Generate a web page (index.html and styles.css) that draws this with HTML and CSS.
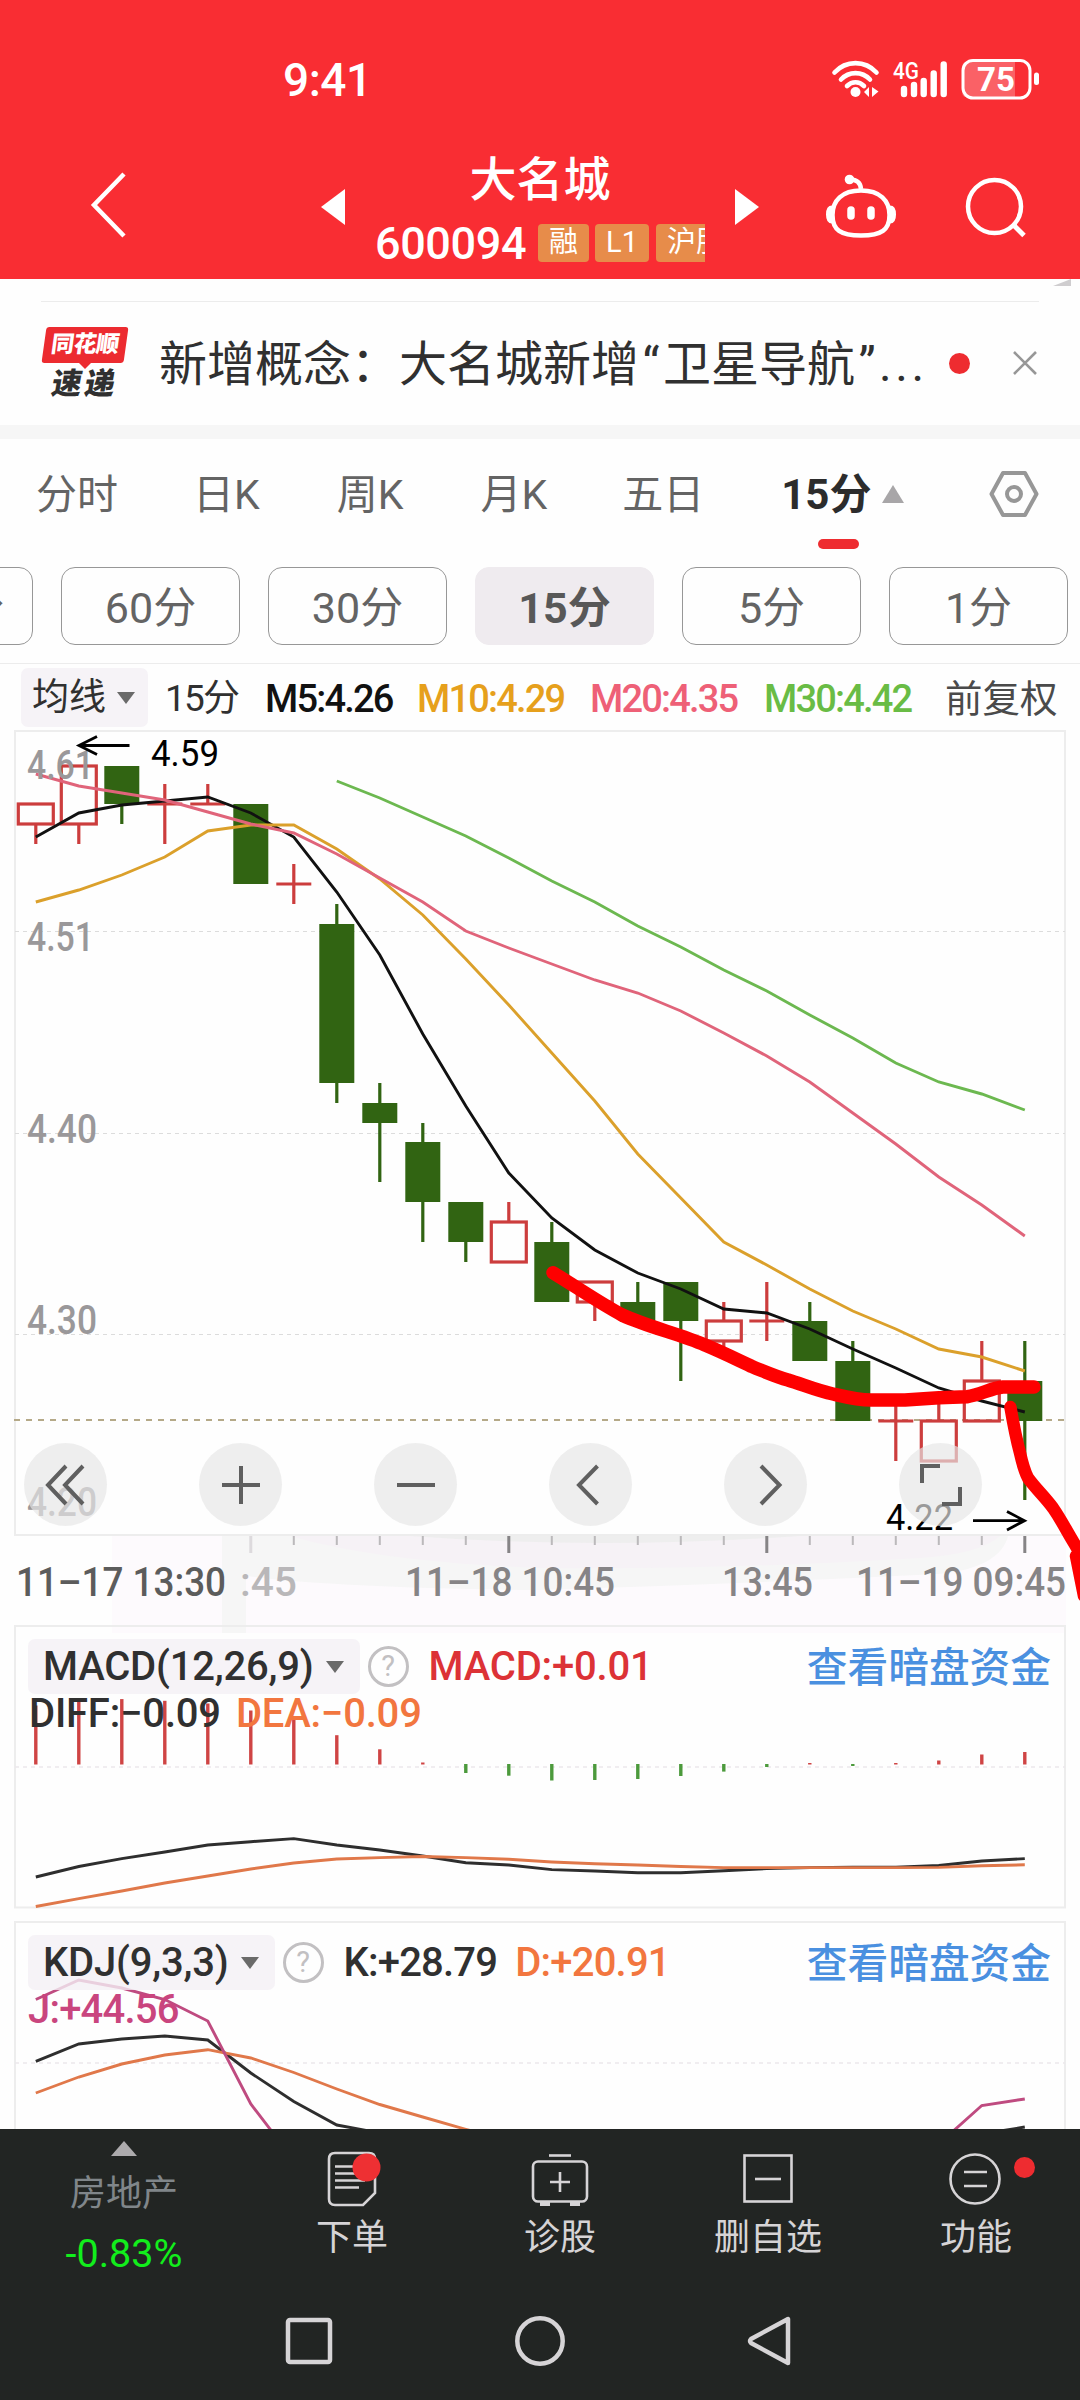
FILE: index.html
```html
<!DOCTYPE html>
<html lang="zh-CN">
<head>
<meta charset="UTF-8">
<meta name="viewport" content="width=device-width, initial-scale=1.0">
<title>大名城 600094</title>
<link rel="stylesheet" href="styles.css">
</head>
<body>

<header class="header">
  <div class="status-bar">
    <span class="clock">9:41</span>
    <svg class="status-icons" width="212" height="44" viewBox="828 58 212 44">
      <g fill="none" stroke="#fff" stroke-width="4.6" stroke-linecap="round">
        <path d="M834.5 72.5C846 60 865 60 876.500 72.500"/>
        <path d="M841 79.500C849 71 862 71 870 79.500"/>
        <path d="M847 86C852 81 859 81 864 86"/>
      </g>
      <circle cx="855.500" cy="92" r="5" fill="#fff"/>
      <path d="M864 92l5-5v10zM872 87l6.500 4.500-6.500 5.500z" fill="#fff"/>
      <text class="net" x="893" y="79" textLength="26" lengthAdjust="spacingAndGlyphs">4G</text>
      <g stroke="#fff" stroke-width="6.400" stroke-linecap="round">
        <path d="M904 89v5M914 85v9M923.700 81v13M933.700 73.500v20.500M943.700 64.500v29.500"/>
      </g>
      <path d="M966 62h49v35h-49q-4 0-4-6v-23q0-6 4-6z" fill="#fff" fill-opacity=".25"/>
      <rect x="963" y="60.500" width="67" height="37.500" rx="10" fill="none" stroke="#fff" stroke-width="3"/>
      <rect x="1034" y="72.500" width="5" height="12.500" rx="2.500" fill="#fff"/>
      <text class="charge" x="977" y="91" textLength="38" lengthAdjust="spacingAndGlyphs">75</text>
    </svg>
  </div>
  <div class="title-bar">
    <svg class="back" width="40" height="70" viewBox="0 0 40 70"><path d="M36 2L6 33l30 31" fill="none" stroke="#fff" stroke-width="4.500"/></svg>
    <svg class="prev" width="24" height="36" viewBox="0 0 24 36"><path d="M24 0v36L0 18z" fill="#fff"/></svg>
    <div class="stock">
      <div class="stock-name">大名城</div>
      <div class="stock-meta">
        <span class="stock-code">600094</span>
        <span class="tag">融</span>
        <span class="tag">L1</span>
        <span class="tag">沪股通</span>
      </div>
    </div>
    <svg class="next" width="24" height="36" viewBox="0 0 24 36"><path d="M0 0v36l24-18z" fill="#fff"/></svg>
    <svg class="robot" width="70" height="66" viewBox="826 173 70 66">
      <path d="M861 189.500c19 0 28.500 10 28.500 24.500 0 15-8 20.500-28.500 20.500s-28.500-5.500-28.500-20.500c0-14.500 9.500-24.500 28.500-24.500z" fill="none" stroke="#fff" stroke-width="4.500"/>
      <path d="M861 188c-.5-6-4-9.500-11-9.500" fill="none" stroke="#fff" stroke-width="4.500"/>
      <circle cx="849.500" cy="178.500" r="4.800" fill="#fff"/>
      <path d="M832 204.500q-6 0-6 9t6 9zM890 204.500q6 0 6 9t-6 9z" fill="#fff"/>
      <path d="M851 209v6M871 209v6" stroke="#fff" stroke-width="7.500" stroke-linecap="round"/>
    </svg>
    <svg class="search" width="62" height="66" viewBox="965 173 62 66">
      <circle cx="994.500" cy="205.500" r="26.500" fill="none" stroke="#fff" stroke-width="4.500"/>
      <path d="M1013 223.500l11 11" stroke="#fff" stroke-width="5"/>
    </svg>
  </div>
</header>

<section class="news">
  <i class="news-corner"></i>
  <div class="news-row">
    <div class="news-logo">
      <span class="logo-top">同花顺</span>
      <i class="logo-tip"></i>
      <span class="logo-bottom">速递</span>
    </div>
    <div class="news-text">新增概念：大名城新增<span class="quote">“</span>卫星导航<span class="quote">”</span><span class="dots">...</span></div>
    <i class="dot"></i>
    <svg class="news-close" width="26" height="26" viewBox="0 0 26 26"><path d="M2 2l22 22M24 2L2 24" stroke="#979797" stroke-width="2.600"/></svg>
  </div>
</section>

<nav class="tabs">
  <span class="tab">分时</span>
  <span class="tab">日K</span>
  <span class="tab">周K</span>
  <span class="tab">月K</span>
  <span class="tab">五日</span>
  <span class="tab active">15分</span>
  <svg class="tab-arrow" width="22" height="18" viewBox="0 0 22 18"><path d="M11 0l11 18H0z" fill="#a8a6a8"/></svg>
  <svg class="settings" width="50" height="48" viewBox="0 0 50 48">
    <path d="M14 3h22l11.500 21L36 45H14L2.500 24z" fill="none" stroke="#979797" stroke-width="4" stroke-linejoin="round"/>
    <circle cx="25" cy="24" r="7" fill="none" stroke="#979797" stroke-width="4"/>
  </svg>
</nav>

<div class="periods">
  <button class="period">120分</button>
  <button class="period">60分</button>
  <button class="period">30分</button>
  <button class="period selected">15分</button>
  <button class="period">5分</button>
  <button class="period">1分</button>
</div>

<div class="legend">
  <span class="select ma-select">均线<i class="caret"></i></span>
  <span class="legend-period">15分</span>
  <span class="m5">M5:4.26</span>
  <span class="m10">M10:4.29</span>
  <span class="m20">M20:4.35</span>
  <span class="m30">M30:4.42</span>
  <span class="adjust">前复权</span>
</div>

<section class="main-chart">
  <svg class="plot" id="klinePlot" width="1080" height="895" viewBox="0 730 1080 895">
    <!-- time axis background -->
    <rect x="112" y="1536" width="954" height="89" fill="#fdfafd"/>
    <path d="M222 1536H1008q-8 32-70 38-200 10-400 16-200-2-292-14v49h-24z" fill="#f6f6f6"/>
    <path d="M290 1536H1000q-20 18-80 22-200 12-380 10-160-6-250-32z" fill="#f6f2f6"/>
    <path d="M410 1536H800q-200 14-390 0z" fill="#eeeeee"/>
    <rect x="15" y="731" width="1050" height="804" fill="none" stroke="#ededed" stroke-width="2"/>
    <g stroke="#dcdcdc" stroke-dasharray="4 4">
      <path d="M15 931.500H1065M15 1133.500H1065M15 1334.500H1065"/>
    </g>
    <path d="M14 1420H1065" stroke="#b5a988" stroke-width="2" stroke-dasharray="6 6"/>
    <g id="ticks"></g>
    <g id="candles"></g>
    <g id="averages"></g>
    <g class="price-label">
      <text x="27" y="779" textLength="67" lengthAdjust="spacingAndGlyphs">4.61</text>
      <text x="27" y="951" textLength="67" lengthAdjust="spacingAndGlyphs">4.51</text>
      <text x="27" y="1143" textLength="70" lengthAdjust="spacingAndGlyphs">4.40</text>
      <text x="27" y="1334" textLength="70" lengthAdjust="spacingAndGlyphs">4.30</text>
      <text x="27" y="1515.500" textLength="70" lengthAdjust="spacingAndGlyphs">4.20</text>
    </g>
    <g class="extreme">
      <text x="151" y="766" textLength="68" lengthAdjust="spacingAndGlyphs">4.59</text>
      <text x="886" y="1530" textLength="67" lengthAdjust="spacingAndGlyphs">4.22</text>
    </g>
    <path d="M129.500 745.500H79M97 736.500l-18 9 18 9M973 1520.700h51M1007 1511.500l17.500 9.200-17.500 9.200" fill="none" stroke="#000" stroke-width="2.800"/>
    <g class="time-label">
      <text class="dark" x="16" y="1595.500" textLength="210" lengthAdjust="spacingAndGlyphs">11–17 13:30</text>
      <text class="faded" x="240" y="1595.500" textLength="57" lengthAdjust="spacingAndGlyphs">:45</text>
      <text x="405" y="1595.500" textLength="210" lengthAdjust="spacingAndGlyphs">11–18 10:45</text>
      <text x="722" y="1595.500" textLength="91" lengthAdjust="spacingAndGlyphs">13:45</text>
      <text x="856" y="1595.500" textLength="210" lengthAdjust="spacingAndGlyphs">11–19 09:45</text>
    </g>
    <!-- hand-drawn trend -->
    <g fill="none" stroke="#fe0000" stroke-linecap="round" stroke-linejoin="round">
      <path stroke-width="13.500" d="M553 1272.700C575 1286 598 1302 622 1315C648 1327 680 1334 705 1345C722 1352 738 1360 753 1367C768 1373 777 1377 788 1380C804 1385 818 1391 833 1394C846 1397 858 1400 871 1400L905 1400L939 1397.700L967 1396.700C980 1395 991 1388 1003 1387L1034 1387"/>
      <path stroke-width="12.500" d="M1010.400 1407C1013 1422 1016 1438 1020 1453C1022 1462 1024 1470 1028 1478C1036 1489 1045 1497 1053 1508C1062 1521 1066 1530 1074 1543L1090 1570"/>
      <path stroke-width="12.500" d="M1076 1556L1084 1596"/>
    </g>
  </svg>
  <div class="controls">
    <button class="control"><svg width="42" height="42" viewBox="-21 -21 42 42"><path d="M0-19l-18 19L0 19M17-19L-1 0l18 19"/></svg></button>
    <button class="control"><svg width="42" height="42" viewBox="-21 -21 42 42"><path d="M-19 0h38M0-19v38"/></svg></button>
    <button class="control"><svg width="42" height="42" viewBox="-21 -21 42 42"><path d="M-19 0h38"/></svg></button>
    <button class="control"><svg width="42" height="42" viewBox="-21 -21 42 42"><path d="M6.500-19L-12 0 6.500 19"/></svg></button>
    <button class="control"><svg width="42" height="42" viewBox="-21 -21 42 42"><path d="M-5-19L13.500 0-5 19"/></svg></button>
    <button class="control"><svg width="42" height="42" viewBox="-21 -21 42 42"><path d="M-19-2v-17h18M19 2v17H1"/></svg></button>
  </div>
</section>

<section class="panel macd">
  <svg class="plot" id="macdPlot" width="1080" height="296" viewBox="0 1625 1080 296">
    <rect x="112" y="1625" width="954" height="8" fill="#fdfafd"/>
    <rect x="222" y="1625" width="24" height="8" fill="#f6f6f6"/>
    <rect x="15" y="1626" width="1050" height="281.500" fill="none" stroke="#ededed" stroke-width="2"/>
    <path d="M15 1767H1065" stroke="#ebe8eb" stroke-width="1.600" stroke-dasharray="4 4"/>
  </svg>
  <div class="panel-head">
    <div class="panel-row">
      <span class="select">MACD(12,26,9)<i class="caret"></i></span>
      <span class="help">?</span>
      <span class="red">MACD:+0.01</span>
      <span class="link">查看暗盘资金</span>
    </div>
    <div class="panel-values">
      <span class="dark">DIFF:−0.09</span>
      <span class="orange">DEA:−0.09</span>
    </div>
  </div>
</section>

<section class="panel kdj">
  <svg class="plot" id="kdjPlot" width="1080" height="208" viewBox="0 1921 1080 208">
    <rect x="15" y="1922" width="1050" height="282" fill="none" stroke="#ededed" stroke-width="2"/>
    <path d="M15 2063H1065" stroke="#ebe8eb" stroke-width="1.600" stroke-dasharray="4 4"/>
  </svg>
  <div class="panel-head">
    <div class="panel-row">
      <span class="select">KDJ(9,3,3)<i class="caret"></i></span>
      <span class="help">?</span>
      <span class="dark">K:+28.79</span>
      <span class="orange">D:+20.91</span>
      <span class="link">查看暗盘资金</span>
    </div>
    <div class="panel-values">
      <span class="pink">J:+44.56</span>
    </div>
  </div>
</section>

<footer class="footer">
  <div class="actions">
    <div class="sector">
      <svg width="26" height="15" viewBox="0 0 26 15"><path d="M13 0l13 15H0z" fill="#adabad"/></svg>
      <span class="sector-name">房地产</span>
      <span class="sector-change">-0.83%</span>
    </div>
    <div class="action">
      <svg width="60" height="60" viewBox="-30 -30 60 60">
        <path d="M-17-26h34q6 0 6 6v34L11 26h-28q-6 0-6-6v-40q0-6 6-6z"/>
        <path d="M-17-12.500H10M-17-5.500H10M-17 1.500H13M-17 8.500H7"/>
        <circle class="badge" cx="14.500" cy="-11.500" r="14"/>
      </svg>
      <span>下单</span>
    </div>
    <div class="action">
      <svg width="60" height="60" viewBox="-30 -30 60 60">
        <path d="M-11-23.500h22"/>
        <rect x="-27" y="-17.500" width="54" height="40" rx="5"/>
        <path d="M-10 3h20M0-7v20"/>
        <path class="feet" d="M-20 25h10M10 25h10"/>
      </svg>
      <span>诊股</span>
    </div>
    <div class="action">
      <svg width="60" height="60" viewBox="-30 -30 60 60">
        <rect x="-23.500" y="-23.500" width="47" height="46"/>
        <path d="M-13 0h26"/>
      </svg>
      <span>删自选</span>
    </div>
    <div class="action">
      <svg width="60" height="60" viewBox="-30 -30 60 60">
        <circle cx="-1" cy="0" r="24.500"/>
        <path d="M-12-7h23M-12 7h23"/>
      </svg>
      <span>功能</span>
      <i class="dot action-dot"></i>
    </div>
  </div>
  <div class="system-nav">
    <svg width="48" height="52" viewBox="0 0 48 52"><rect x="3" y="5" width="42" height="42" rx="2" fill="none" stroke="#d6d4d6" stroke-width="4.500"/></svg>
    <svg width="52" height="52" viewBox="0 0 52 52"><circle cx="26" cy="26" r="22.700" fill="none" stroke="#d6d4d6" stroke-width="4.500"/></svg>
    <svg width="46" height="52" viewBox="0 0 46 52"><path d="M42 4v44L5 28q-2-2 0-4z" fill="none" stroke="#d6d4d6" stroke-width="4.500" stroke-linejoin="round"/></svg>
  </div>
</footer>

<script src="script.js"></script>
</body>
</html>
```
FILE: styles.css
```css
body {
  margin: 0;
  width: 1080px;
  height: 2400px;
  overflow: hidden;
  background-color: #fefefe;
  font-family: Roboto, "Noto Sans CJK SC", sans-serif;
  color: #303030;
}
svg {
  display: block;
  flex: none;
}
button {
  font-family: inherit;
  padding: 0;
}

/* header */
.header {
  height: 279px;
  background-color: #f92d33;
  color: #fff;
}
.status-bar {
  display: flex;
  justify-content: space-between;
  align-items: center;
  height: 120px;
  padding: 20px 40px 0 283px;
}
.clock {
  font-size: 46px;
  font-weight: 500;
  letter-spacing: -0.5px;
}
.net {
  font-size: 24px;
  font-weight: 500;
  fill: #fff;
}
.charge {
  font-size: 34px;
  font-weight: 700;
  fill: #fff;
}
.title-bar {
  display: flex;
  align-items: center;
  height: 133px;
  padding-left: 88px;
}
.prev {
  margin-left: 193px;
}
.stock {
  width: 330px;
  margin-left: 30px;
  overflow: hidden;
}
.stock-name {
  height: 56px;
  line-height: 58px;
  font-size: 47px;
  font-weight: 500;
  text-align: center;
}
.stock-meta {
  display: flex;
  align-items: center;
  gap: 6px;
  height: 38px;
  margin-top: 17px;
}
.stock-code {
  flex: none;
  width: 157px;
  font-size: 45px;
  font-weight: 500;
  line-height: 40px;
  padding-top: 2px;
  letter-spacing: -0.4px;
}
.tag {
  flex: none;
  box-sizing: border-box;
  height: 38px;
  padding: 0 11px;
  border-radius: 4px;
  background-color: #e78c4a;
  font-size: 29px;
  line-height: 37px;
}
.tag:last-child {
  margin-left: 1px;
}
.next {
  margin-left: 30px;
}
.robot {
  margin-left: 67px;
}
.search {
  margin-left: 69px;
}

/* news */
.news {
  position: relative;
  height: 146px;
  border-bottom: 14px solid #f6f6f6;
}
.news-corner {
  position: absolute;
  top: 0;
  right: 9px;
  border-left: 18px solid transparent;
  border-bottom: 7px solid #cfcdcf;
}
.news-row {
  display: flex;
  align-items: center;
  height: 122px;
  margin: 0 41px;
  border-top: 1px solid #ececec;
  position: relative;
  top: 22px;
}
.news-logo {
  display: flex;
  flex-direction: column;
  align-items: center;
  width: 88px;
  height: 72px;
}
.logo-top {
  width: 82px;
  height: 37px;
  border-radius: 3px;
  background-color: #ec2b30;
  color: #fff;
  font-size: 23px;
  font-weight: 900;
  line-height: 36px;
  letter-spacing: -0.5px;
  text-align: center;
  transform: skewX(-8deg);
}
.logo-tip {
  border: 6px solid transparent;
  border-top-color: #ec2b30;
  border-bottom: 0;
}
.logo-bottom {
  font-size: 30px;
  font-weight: 900;
  line-height: 30px;
  letter-spacing: 3px;
  transform: skewX(-10deg);
}
.news-text {
  width: 778px;
  margin-left: 30px;
  padding-bottom: 6px;
  font-size: 48px;
  white-space: nowrap;
}
.quote {
  display: inline-block;
  width: 24px;
  text-align: center;
}
.dots {
  letter-spacing: 3.6px;
}
.dot {
  flex: none;
  width: 21px;
  height: 21px;
  border-radius: 50%;
  background-color: #ee2c30;
}
.news-text + .dot {
  margin-left: 12px;
}
.news-close {
  margin-left: 42px;
}

/* period tabs */
.tabs {
  display: flex;
  align-items: center;
  height: 110px;
  padding-left: 36px;
  font-size: 41px;
  color: #646464;
}
.tab {
  line-height: 60px;
  padding-top: 2px;
  margin-right: 77px;
}
.tab:nth-child(1) {
  margin-right: 75px;
}
.tab:nth-child(4) {
  margin-right: 75px;
}
.tab.active {
  position: relative;
  margin-right: 11px;
  color: #2c2c2c;
  font-size: 42px;
  font-weight: 700;
}
.tab.active::after {
  content: "";
  position: absolute;
  left: 37px;
  top: 76px;
  width: 41px;
  height: 10px;
  border-radius: 5px;
  background-color: #ee2c30;
}
.settings {
  margin-left: auto;
  margin-right: 41px;
}
.periods {
  display: flex;
  gap: 28px;
  height: 96px;
  padding-top: 18px;
  margin-left: -146px;
  width: 1226px;
  border-bottom: 1px solid #ececec;
}
.period {
  flex: none;
  box-sizing: border-box;
  width: 179px;
  height: 78px;
  padding-bottom: 5px;
  border: 1.5px solid #979797;
  border-radius: 14px;
  background: none;
  color: #646464;
  font-size: 43px;
}
.period:first-child {
  padding-left: 6px;
}
.period.selected {
  border-color: #efebef;
  background-color: #efebef;
  color: #585858;
  font-weight: 700;
}

/* moving average legend */
.legend {
  display: flex;
  align-items: center;
  height: 66px;
  padding-left: 21px;
  font-size: 38px;
  font-weight: 500;
  line-height: 46px;
  letter-spacing: -1.8px;
  white-space: nowrap;
}
.legend > span {
  flex: none;
  box-sizing: border-box;
  padding-top: 4px;
}
.select {
  display: flex;
  align-items: center;
  border-radius: 7px;
  background-color: rgba(244, 240, 245, 0.8);
}
.caret {
  border: 9px solid transparent;
  border-top: 12px solid #6a6a6a;
  border-bottom: 0;
}
.legend .ma-select {
  justify-content: space-between;
  width: 127px;
  height: 59px;
  padding: 1px 13px 0 11px;
  font-size: 37px;
  font-weight: 400;
  letter-spacing: 0;
}
.legend-period {
  width: 100px;
  margin-left: 17px;
  font-size: 37px;
  font-weight: 400;
}
.m5 {
  width: 152px;
  color: #111;
}
.m10 {
  width: 173px;
  color: #e6a01c;
}
.m20 {
  width: 174px;
  color: #ee6077;
}
.m30 {
  width: 181px;
  color: #69bc45;
}
.adjust {
  font-size: 37.5px;
  font-weight: 400;
  letter-spacing: 0;
  color: #4a4a4a;
}

/* charts */
.main-chart {
  position: relative;
  height: 895px;
}
.price-label {
  font-size: 40px;
  font-weight: 500;
  fill: #9a989a;
}
.extreme {
  font-size: 37px;
  fill: #000;
}
.time-label {
  font-size: 40px;
  font-weight: 500;
  fill: #868486;
}
.time-label .dark {
  fill: #5c5c5c;
}
.time-label .faded {
  fill: #b9b7b9;
}
.controls {
  position: absolute;
  left: 24px;
  top: 713px;
  display: flex;
  justify-content: space-between;
  width: 958px;
}
.control {
  display: flex;
  justify-content: center;
  align-items: center;
  width: 83px;
  height: 83px;
  border: none;
  border-radius: 50%;
  background-color: rgba(229, 229, 229, 0.67);
}
.control svg {
  fill: none;
  stroke: #5f5f5f;
  stroke-width: 4px;
}
.panel {
  display: grid;
}
.panel > * {
  grid-area: 1 / 1;
}
.macd {
  height: 296px;
}
.kdj {
  height: 208px;
  overflow: hidden;
}
.panel-head {
  padding: 14px 29px 0 28px;
  font-size: 40px;
  font-weight: 500;
  letter-spacing: -0.2px;
  white-space: nowrap;
}
.panel-row {
  display: flex;
  align-items: center;
  height: 55px;
}
.panel-row .select {
  height: 55px;
  padding: 0 16px 0 15px;
  color: #303030;
}
.panel-row .caret {
  margin-left: 12px;
}
.help {
  box-sizing: border-box;
  width: 41px;
  height: 41px;
  margin: 0 20px 0 8px;
  border: 3px solid #c2c0c2;
  border-radius: 50%;
  color: #c2c0c2;
  font-size: 29px;
  font-weight: 400;
  line-height: 35px;
  text-align: center;
}
.link {
  margin-left: auto;
  padding-bottom: 4px;
  font-size: 40.7px;
  letter-spacing: 0;
  color: #4a90e0;
}
.panel-values {
  display: flex;
  gap: 15px;
  height: 40px;
  line-height: 39px;
}
.kdj .panel-row .dark,
.kdj .orange,
.kdj .pink {
  letter-spacing: -0.8px;
}
.kdj .panel-row .dark {
  margin-right: 18px;
}
.macd .panel-values {
  padding-left: 1px;
}
.dark {
  color: #303030;
}
.red {
  color: #dc3236;
}
.orange {
  color: #f2763f;
}
.pink {
  color: #c9457e;
}

/* footer */
.footer {
  position: relative;
  height: 271px;
  background-color: #222523;
}
.actions {
  display: grid;
  grid-template-columns: 248px repeat(4, 208px);
  height: 153px;
}
.sector,
.action {
  position: relative;
  display: flex;
  flex-direction: column;
  align-items: center;
}
.sector {
  padding-top: 12px;
}
.sector-name {
  margin-top: 16px;
  color: #80868a;
  font-size: 36px;
  line-height: 44px;
}
.sector-change {
  margin-top: 16px;
  color: #12ee1c;
  font-size: 39.5px;
  line-height: 44px;
}
.action {
  padding-top: 20px;
  color: #d6d4d6;
  font-size: 36px;
  line-height: 44px;
}
.action svg {
  fill: none;
  stroke: #d6d4d6;
  stroke-width: 2.6px;
  margin-bottom: 7px;
}
.action .feet {
  stroke-width: 4px;
}
.action .badge {
  fill: #ee3033;
  stroke: none;
}
.action-dot {
  position: absolute;
  top: 28px;
  right: 45px;
}
.system-nav {
  display: flex;
  align-items: center;
  justify-content: space-between;
  height: 118px;
  padding: 0 288px 0 285px;
}
```
FILE: script.js
```js
const NS = 'http://www.w3.org/2000/svg';
const RED = '#cc3d3d';
const GREEN = '#316412';
const LINE = 2.9;

function xAt(i) {
  return 35.8 + i * 43;
}

function add(parent, tag, attrs) {
  const el = document.createElementNS(NS, tag);
  for (const key in attrs) {
    el.setAttribute(key, attrs[key]);
  }
  parent.appendChild(el);
}

function vline(parent, i, y1, y2, color, width) {
  add(parent, 'rect', { x: xAt(i) - width / 2, y: y1, width: width, height: y2 - y1, fill: color });
}

function polyline(parent, start, ys, color) {
  const points = ys.map((y, i) => xAt(start + i) + ',' + y).join(' ');
  add(parent, 'polyline', { points: points, fill: 'none', stroke: color, 'stroke-width': LINE });
}

// [up, wick top, body top, body bottom, wick bottom]
const candles = [
  [1, 804, 804, 824, 844], [1, 765, 766, 824, 844], [0, 766, 766, 804, 824],
  [1, 784, 804, 804, 844], [1, 784, 804, 804, 804], [0, 804, 804, 884, 884],
  [1, 864, 884, 884, 904], [0, 904, 924, 1083, 1103], [0, 1083, 1103, 1123, 1182],
  [0, 1123, 1142, 1202, 1242], [0, 1202, 1202, 1242, 1262], [1, 1202, 1222, 1262, 1262],
  [0, 1222, 1242, 1302, 1302], [1, 1282, 1282, 1302, 1321], [0, 1282, 1302, 1322, 1322],
  [0, 1282, 1282, 1321, 1381], [1, 1302, 1321, 1341, 1350], [1, 1282, 1321, 1321, 1341],
  [0, 1302, 1321, 1361, 1361], [0, 1341, 1361, 1421, 1421], [1, 1400, 1421, 1421, 1461],
  [1, 1400, 1421, 1461, 1461], [1, 1341, 1381, 1421, 1421], [0, 1341, 1381, 1421, 1500]
];

const candleLayer = document.getElementById('candles');
candles.forEach(([up, high, top, bottom, low], i) => {
  const color = up ? RED : GREEN;
  vline(candleLayer, i, high, top, color, 3.2);
  vline(candleLayer, i, bottom, low, color, 3.2);
  if (!up) {
    vline(candleLayer, i, top, bottom, color, 35);
  } else if (top === bottom) {
    vline(candleLayer, i, top - 1.5, top + 1.5, color, 35);
  } else {
    add(candleLayer, 'rect', {
      x: xAt(i) - 17.5, y: top, width: 35, height: bottom - top,
      fill: 'none', stroke: color, 'stroke-width': 3.2
    });
  }
});

const averages = document.getElementById('averages');
polyline(averages, 0, [837, 813, 805, 801, 797, 813, 837, 892, 955, 1034, 1106, 1173, 1218, 1250, 1273, 1289, 1309, 1313, 1329, 1349, 1368, 1388, 1401, 1412], '#111');
polyline(averages, 0, [902, 890, 875, 857, 831, 825, 825, 849, 879, 915, 959, 1005, 1053, 1101, 1154, 1198, 1242, 1265, 1289, 1311, 1329, 1349, 1357, 1371], '#dba02b');
polyline(averages, 0, [774, 786, 793, 800, 812, 824, 833, 854, 878, 902, 931, 948, 964, 980, 993, 1011, 1033, 1056, 1082, 1113, 1144, 1177, 1205, 1236], '#e0647a');
polyline(averages, 7, [781, 798, 817, 836, 858, 881, 902, 926, 947, 970, 991, 1015, 1038, 1063, 1082, 1094, 1110], '#6cb850');

// long tick under every label, short ones between
const ticks = document.getElementById('ticks');
for (let i = 5; i < 24; i++) {
  const major = (i - 5) % 6 === 0;
  vline(ticks, i, 1536, major ? 1553 : 1545, i === 5 ? '#dddadd' : major ? '#868486' : '#bbb9bb', major ? 3 : 2);
}

const macd = document.getElementById('macdPlot');
const bars = [59, 64.4, 65.4, 63.7, 61, 54, 48, 29.3, 15.2, 2, -9, -11.7, -16.5, -16, -15, -12, -7.6, -3, 1.5, -2, 1.5, 4, 10, 12.5];
bars.forEach((v, i) => {
  vline(macd, i, v > 0 ? 1764.5 - v : 1764, v > 0 ? 1764.5 : 1764 - v, v > 0 ? '#cf4444' : '#4c9a3c', 3.4);
});
polyline(macd, 0, [1877, 1866.5, 1858.6, 1852, 1845, 1841.7, 1838.6, 1845, 1850, 1856, 1862.7, 1865, 1869.6, 1871, 1872.7, 1872.7, 1870.7, 1868.6, 1867.6, 1867.3, 1867.3, 1865.5, 1861, 1858.6], '#2e2e2e');
polyline(macd, 0, [1906.5, 1898.6, 1891, 1883, 1876, 1869, 1863, 1859, 1857.6, 1856.5, 1857.6, 1859.3, 1862, 1863.8, 1865, 1866.5, 1867.6, 1867.6, 1867.6, 1867.6, 1867.6, 1867.4, 1865.7, 1864.8], '#e0784a');

const kdj = document.getElementById('kdjPlot');
polyline(kdj, 0, [2061.4, 2044, 2039, 2036, 2040, 2073, 2101.4, 2125, 2133, 2145], '#2e2e2e');
polyline(kdj, 0, [2093, 2077, 2064, 2055, 2049.7, 2058, 2072.5, 2089, 2104.5, 2117, 2129.3, 2141], '#e0784a');
polyline(kdj, 0, [1999.5, 1980, 1988, 1999.5, 2021, 2104, 2160], '#bf4b80');
polyline(kdj, 21, [2144, 2105.5, 2099], '#bf4b80');
polyline(kdj, 22, [2134, 2127], '#2e2e2e');
```
